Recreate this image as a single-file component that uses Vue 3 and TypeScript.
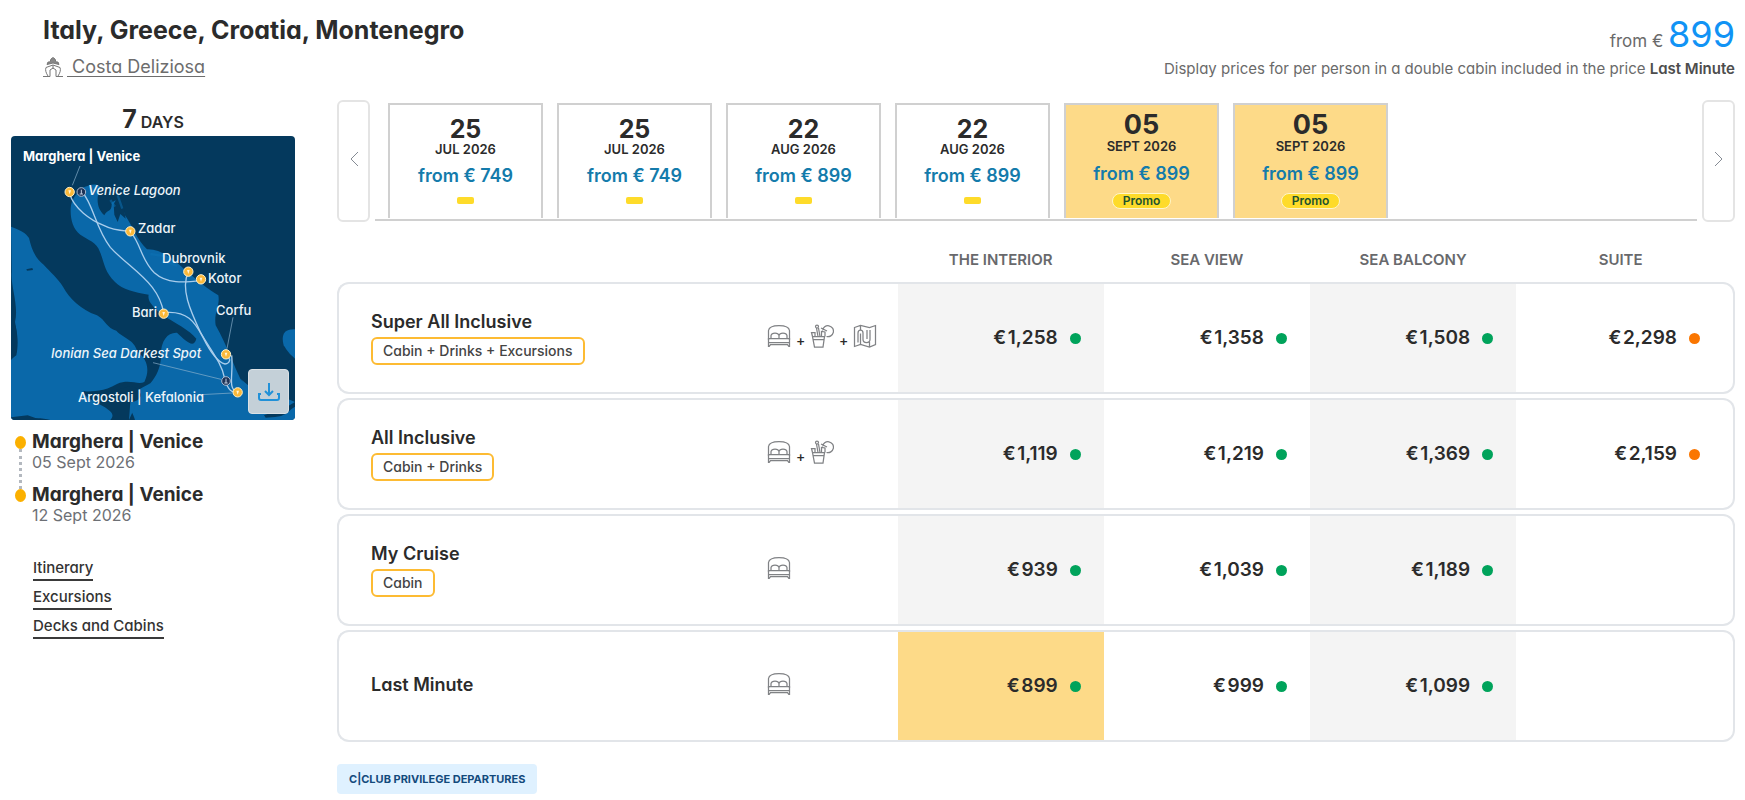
<script setup lang="ts">
interface Departure {
  id: number
  day: string
  month: string
  price: string
  promo: boolean
}

interface Fare {
  price: string
  status: 'available' | 'limited'
  best?: boolean
}

interface Offer {
  name: string
  includes: string
  icons: ('cabin' | 'drinks' | 'tours')[]
  fares: (Fare | null)[]
}

interface Stop {
  port: string
  date: string
}

const departures: Departure[] = [
  { id: 1, day: '25', month: 'JUL 2026', price: '749', promo: false },
  { id: 2, day: '25', month: 'JUL 2026', price: '749', promo: false },
  { id: 3, day: '22', month: 'AUG 2026', price: '899', promo: false },
  { id: 4, day: '22', month: 'AUG 2026', price: '899', promo: false },
  { id: 5, day: '05', month: 'SEPT 2026', price: '899', promo: true },
  { id: 6, day: '05', month: 'SEPT 2026', price: '899', promo: true },
]

const cabins: string[] = ['THE INTERIOR', 'SEA VIEW', 'SEA BALCONY', 'SUITE']

const offers: Offer[] = [
  {
    name: 'Super All Inclusive',
    includes: 'Cabin + Drinks + Excursions',
    icons: ['cabin', 'drinks', 'tours'],
    fares: [
      { price: '1,258', status: 'available' },
      { price: '1,358', status: 'available' },
      { price: '1,508', status: 'available' },
      { price: '2,298', status: 'limited' },
    ],
  },
  {
    name: 'All Inclusive',
    includes: 'Cabin + Drinks',
    icons: ['cabin', 'drinks'],
    fares: [
      { price: '1,119', status: 'available' },
      { price: '1,219', status: 'available' },
      { price: '1,369', status: 'available' },
      { price: '2,159', status: 'limited' },
    ],
  },
  {
    name: 'My Cruise',
    includes: 'Cabin',
    icons: ['cabin'],
    fares: [
      { price: '939', status: 'available' },
      { price: '1,039', status: 'available' },
      { price: '1,189', status: 'available' },
      null,
    ],
  },
  {
    name: 'Last Minute',
    includes: '',
    icons: ['cabin'],
    fares: [
      { price: '899', status: 'available', best: true },
      { price: '999', status: 'available' },
      { price: '1,099', status: 'available' },
      null,
    ],
  },
]

const stops: Stop[] = [
  { port: 'Marghera | Venice', date: '05 Sept 2026' },
  { port: 'Marghera | Venice', date: '12 Sept 2026' },
]

const links: string[] = ['Itinerary', 'Excursions', 'Decks and Cabins']

const ports: [number, number][] = [
  [208, 200],
  [390, 318],
  [564, 439],
  [602, 462],
  [490, 565],
  [677, 687],
  [712, 801],
]

const sights: [number, number][] = [
  [243, 200],
  [677, 767],
]
</script>

<template>
  <div class="page">
    <header class="top">
      <div>
        <h1 class="title">Italy, Greece, Croatia, Montenegro</h1>
        <div class="ship">
          <svg class="ship-icon" viewBox="0 0 20 20" aria-hidden="true">
            <path d="M0 19.5h7M13 19.5h7M5 19C3 16 2 13 3 10.5L10 8l7 2.500C18 13 17 16 15 19M7 19.500V13l3-2 3 2v6.500M10 8v4" />
            <path class="solid" d="M4 7.500L5 5h2l1-3 2-1.500L12 2l1 3h2l1 2.500L10 6z" />
          </svg>
          <a href="#ship">&nbsp;Costa Deliziosa</a>
        </div>
      </div>
      <div class="summary">
        <p class="lead">from € <span class="amount">899</span></p>
        <p class="note">Display prices for per person in a double cabin included in the price <strong>Last Minute</strong></p>
      </div>
    </header>

    <div class="columns">
      <aside class="side">
        <p class="days"><span class="days-count">7</span> DAYS</p>

        <div class="map">
          <svg class="map-art" viewBox="0 0 284 284" role="img" aria-label="Cruise route map">
            <svg viewBox="32 32 852 852" width="284" height="284">
              <rect x="32" y="32" width="852" height="852" fill="#04395d" />
              <g fill="#0a68a9">
                <path d="M212 240C208 270 214 310 240 328C262 344 290 350 298 378C312 410 312 440 344 470C368 494 400 500 445 508C440 530 462 545 480 566C520 590 570 616 588 640C580 670 560 650 530 622C500 620 478 650 482 700C478 730 470 750 450 774C420 790 398 800 388 830C386 850 400 868 404 884H800C780 850 750 800 720 760C700 720 680 660 646 600C640 560 660 540 654 510C620 490 600 470 560 440C520 400 480 370 440 372C410 345 396 300 374 270C366 240 360 210 334 232C336 262 318 252 312 270C290 250 286 220 300 184C280 170 262 184 250 186C230 200 218 216 212 240Z" />
                <path d="M32 304C60 314 76 322 86 338C94 372 104 398 130 418C150 440 172 458 188 484C208 520 240 552 290 570C316 584 320 610 348 616C370 640 400 640 412 680C440 700 450 734 432 770C412 780 388 760 350 776C310 800 280 796 252 800C300 830 360 800 410 830L386 884H150C120 874 80 880 32 884V700L48 690C56 650 50 620 44 590C56 540 30 480 34 440Z" />
                <path d="M884 612C850 610 842 630 850 660C862 680 872 690 884 700Z" />
                <path d="M780 884C800 870 830 880 850 868C862 866 870 850 884 844V884Z" />
                <path d="M720 760L756 790L850 816L884 830L850 850L790 870Z" />
              </g>
              <g fill="#04395d">
                <path d="M340 236l12-20 18 30 6 34-16-14-8 24-10-22z" />
                <path d="M78 432l18-4 2 6-18 2z" />
                <path d="M250 796C290 812 340 796 392 782C440 800 420 830 390 830L386 884H330C350 862 320 850 290 832C270 822 250 812 250 796Z" />
                <path d="M32 572C52 600 54 650 46 690L32 704ZM32 876l50-6 40 14H32z" />
              </g>
              <g fill="none" stroke="#0b72b5" stroke-width="7" opacity=".5">
                <path d="M450 386l50 8M500 410l30 12M330 224l14 20M352 210l14 40" />
              </g>
              <g fill="none" stroke="#a9cdec" stroke-width="4">
                <path d="M208 206C222 250 270 284 310 300C340 316 370 316 390 318C424 360 422 404 462 442C500 476 550 472 602 466" />
                <path d="M246 200C280 240 286 310 330 366C370 410 420 440 456 486C476 512 486 540 490 562C560 554 584 590 608 636C630 680 650 710 674 716C690 714 692 700 680 690" />
                <path d="M564 440C540 490 570 556 600 620C630 674 664 712 672 756C676 780 690 806 712 801C680 790 700 750 694 690" />
              </g>
              <g fill="none" stroke="#8eb4cf" stroke-width="2">
                <path d="M239 122L216 180M698 576L680 670M458 712L662 762M602 808L696 803" />
              </g>
              <g v-for="([x, y], i) in ports" :key="'p' + i">
                <circle :cx="x" :cy="y" r="14" fill="#fbb93a" stroke="#fff0c8" stroke-width="3" />
                <path :d="`M${x - 4} ${y - 5}l4 12 4-12z`" fill="#fff4da" />
              </g>
              <g v-for="([x, y], i) in sights" :key="'s' + i">
                <circle :cx="x" :cy="y" r="13" fill="#1e3357" stroke="#a9b9cf" stroke-width="3" />
                <path :d="`M${x} ${y - 7}v13M${x - 5} ${y + 6}h10`" stroke="#c5d1e2" stroke-width="3" />
              </g>
            </svg>
            <g class="map-text">
              <text class="strong" x="12" y="25">Marghera | Venice</text>
              <text class="sight" x="77" y="59">Venice Lagoon</text>
              <text x="127" y="97">Zadar</text>
              <text x="151" y="127">Dubrovnik</text>
              <text x="197" y="147">Kotor</text>
              <text x="121" y="181">Bari</text>
              <text x="205" y="179">Corfu</text>
              <text class="sight" x="40" y="222">Ionian Sea Darkest Spot</text>
              <text x="67" y="266">Argostoli | Kefalonia</text>
            </g>
          </svg>
          <button class="download" type="button" aria-label="Download map">
            <svg viewBox="0 0 24 20" aria-hidden="true">
              <path d="M12 1v12M8 9l4 4 4-4M2 12v4q0 2 2 2h16q2 0 2-2v-4M1 12h3M20 12h3" />
            </svg>
          </button>
        </div>

        <ol class="stops">
          <li v-for="stop in stops" :key="stop.date" class="stop">
            <span class="port">{{ stop.port }}</span>
            <span class="date">{{ stop.date }}</span>
          </li>
        </ol>

        <nav class="links">
          <a v-for="link in links" :key="link" href="#details">{{ link }}</a>
        </nav>
      </aside>

      <main class="main">
        <div class="carousel">
          <button class="arrow" type="button" aria-label="Previous departures">
            <svg viewBox="0 0 10 16" aria-hidden="true"><path d="M9 1L2 8l7 7" /></svg>
          </button>
          <div class="track">
            <button
              v-for="departure in departures"
              :key="departure.id"
              type="button"
              class="departure"
              :class="{ promo: departure.promo }"
            >
              <span class="day">{{ departure.day }}</span>
              <span class="month">{{ departure.month }}</span>
              <span class="from">from € {{ departure.price }}</span>
              <span v-if="departure.promo" class="badge">Promo</span>
              <span v-else class="dash"></span>
            </button>
          </div>
          <button class="arrow" type="button" aria-label="Next departures">
            <svg viewBox="0 0 10 16" aria-hidden="true"><path d="M1 1l7 7-7 7" /></svg>
          </button>
        </div>

        <table class="fares">
          <colgroup>
            <col class="col-name" />
            <col class="col-icons" />
            <col class="col-fare" />
            <col class="col-fare" />
            <col class="col-fare" />
            <col class="col-last" />
          </colgroup>
          <thead>
            <tr>
              <td colspan="2"></td>
              <th v-for="cabin in cabins" :key="cabin" scope="col">{{ cabin }}</th>
            </tr>
          </thead>
          <tbody>
            <tr v-for="offer in offers" :key="offer.name">
              <th scope="row" class="offer">
                <span class="offer-name">{{ offer.name }}</span>
                <span v-if="offer.includes" class="includes">{{ offer.includes }}</span>
              </th>
              <td class="icons-cell">
                <div class="icons">
                  <template v-for="(icon, i) in offer.icons" :key="icon">
                    <span v-if="i > 0" class="plus">+</span>
                    <svg v-if="icon === 'cabin'" class="icon" viewBox="0 0 24 24" aria-hidden="true">
                      <path d="M1.500 16V6.500C2 3 6 1.500 12 1.500S22 3 22.500 6.500V16" />
                      <path d="M1.500 23v-8.500h21V23M1.500 18.500h21M2 22.500l1.500-2h17l1.500 2" />
                      <path d="M4 14v-2.500Q4.500 9 8 9t4 2.500V14M12 14v-2.500Q12.500 9 16 9t4 2.500V14" />
                    </svg>
                    <svg v-else-if="icon === 'drinks'" class="icon" viewBox="0 0 24 24" aria-hidden="true">
                      <path d="M2.500 12.500h12L13 23H4.500zM2.500 12.500L1.500 8.500H5v4M11.500 12.500v-5L15 8v4.500M3 15.500h11M8 12.500L6.500 4M10 12.500L8.500 4" />
                      <circle cx="7" cy="2.500" r="1.500" />
                      <path d="M12.500 6.500A5.500 5.500 0 1 1 16.500 12.500M11 4l6 3" />
                    </svg>
                    <svg v-else class="icon" viewBox="0 0 24 24" aria-hidden="true">
                      <path d="M1.500 3.500l6-2 9 2 6-2v19l-6 2.500-9-2.500-6 2zM7.500 1.500V6M16.500 18v5" />
                      <path d="M5 18.500V9q0-3 2.500-3T10 9v6.500q0 3 3.500 3T17 15.500V6M7.500 9.500v11M14 6v9" />
                    </svg>
                  </template>
                </div>
              </td>
              <td v-for="(fare, i) in offer.fares" :key="i" class="fare" :class="{ best: fare?.best }">
                <div v-if="fare" class="price">
                  <span>€&#8202;{{ fare.price }}</span>
                  <span class="dot" :class="fare.status"></span>
                </div>
              </td>
            </tr>
          </tbody>
        </table>

        <span class="club">C|CLUB PRIVILEGE DEPARTURES</span>
      </main>
    </div>
  </div>
</template>

<style>
body {
  margin: 0;
  background: #fff;
}
</style>

<style scoped>
.page {
  box-sizing: border-box;
  padding: 0 10px 6px 11px;
  font-family: Inter, "Open Sans", sans-serif;
  font-feature-settings: "cv11";
  color: #2b2b2b;
}

.page * {
  box-sizing: border-box;
}

button {
  font: inherit;
  font-feature-settings: inherit;
  color: inherit;
  padding: 0;
  cursor: pointer;
}

.top {
  display: flex;
  justify-content: space-between;
  height: 100px;
  padding-left: 32px;
}

.title {
  margin: 0;
  padding-top: 15px;
  font-size: 25px;
  line-height: 30px;
  font-weight: 700;
}

.ship {
  display: flex;
  align-items: center;
  gap: 4px;
  margin-top: 10px;
  font-size: 18px;
  line-height: 24px;
  color: #6d6d6d;
}

.ship a {
  color: inherit;
  text-underline-offset: 3px;
}

.ship-icon {
  width: 20px;
  height: 20px;
  fill: none;
  stroke: #777;
  stroke-width: 1;
}

.ship-icon .solid {
  fill: #888;
}

.summary {
  text-align: right;
  color: #6a6a6a;
}

.summary p {
  margin: 0;
}

.lead {
  padding-top: 12px;
  height: 59px;
  font-size: 17px;
  line-height: 44px;
}

.amount {
  font-size: 36px;
  color: #1193f5;
}

.note {
  font-size: 15px;
  line-height: 20px;
}

.note strong {
  font-weight: 600;
  color: #4d4d4d;
}

.columns {
  display: grid;
  grid-template-columns: 284px minmax(0, 1fr);
  column-gap: 42px;
}

.days {
  margin: 0;
  height: 36px;
  line-height: 38px;
  text-align: center;
  font-size: 16px;
  font-weight: 600;
}

.days-count {
  font-size: 25px;
  font-weight: 700;
}

.map {
  position: relative;
}

.map-art {
  display: block;
  width: 100%;
  border-radius: 4px;
}

.map-text {
  font-size: 13px;
  font-weight: 500;
  fill: #eef5fa;
}

.map-text .strong {
  font-weight: 700;
  fill: #fff;
}

.map-text .sight {
  font-style: italic;
}

.download {
  position: absolute;
  right: 6px;
  bottom: 6px;
  display: grid;
  place-items: center;
  width: 41px;
  height: 45px;
  border: 1px solid #dbe1e5;
  border-radius: 4px;
  background: #c4d0d8;
}

.download svg {
  width: 24px;
  height: 20px;
  fill: none;
  stroke: #2191d8;
  stroke-width: 2;
}

.stops {
  list-style: none;
  margin: 0;
  padding: 10px 0 0 4px;
}

.stop {
  position: relative;
  height: 53px;
  padding-left: 17px;
}

.stop::before {
  content: "";
  position: absolute;
  left: 0;
  top: 6px;
  width: 11px;
  height: 13px;
  border-radius: 50%;
  background: #fbb000;
}

.stop:first-child::after {
  content: "";
  position: absolute;
  left: 4px;
  top: 19px;
  height: 40px;
  border-left: 3px dotted #b3b8bf;
}

.port,
.date {
  display: block;
}

.port {
  font-size: 19px;
  line-height: 23px;
  font-weight: 700;
}

.date {
  font-size: 16px;
  line-height: 18px;
  color: #6d7075;
}

.links {
  display: flex;
  flex-direction: column;
  align-items: flex-start;
  gap: 4px;
  padding: 20px 0 0 22px;
}

.links a {
  border-bottom: 2px solid #3a3a3a;
  font-size: 15px;
  line-height: 23px;
  font-weight: 500;
  color: #333;
  text-decoration: none;
}

.carousel {
  display: flex;
  gap: 5px;
  height: 122px;
}

.arrow {
  flex: none;
  width: 33px;
  border: 2px solid #e4e4e4;
  border-radius: 6px;
  background: #fff;
}

.arrow svg {
  width: 10px;
  height: 16px;
  fill: none;
  stroke: #858b94;
  stroke-width: 1;
}

.track {
  flex: 1;
  display: flex;
  align-items: flex-start;
  gap: 14px;
  height: 121px;
  padding: 3px 0 0 13px;
  border-bottom: 2px solid #d0d0d0;
}

.departure {
  display: flex;
  flex-direction: column;
  align-items: center;
  width: 155px;
  height: 115px;
  padding-top: 12px;
  border: 2px solid #d0d0d0;
  border-bottom: 0;
  background: #fff;
}

.day {
  font-size: 25px;
  line-height: 25px;
  font-weight: 700;
}

.month {
  font-size: 13px;
  line-height: 14px;
  font-weight: 600;
}

.from {
  margin-top: 8px;
  font-size: 18px;
  line-height: 24px;
  font-weight: 600;
  color: #147bab;
}

.dash {
  width: 17px;
  height: 7px;
  margin-top: 9px;
  border-radius: 2px;
  background: #fedb2a;
}

.departure.promo {
  padding-top: 6px;
  background: #fdda88;
}

.promo .day {
  font-size: 27px;
  line-height: 28px;
}

.promo .month {
  line-height: 15px;
}

.badge {
  margin-top: 7px;
  padding: 0 10px;
  border: 1px solid #fff6c8;
  border-radius: 8px;
  background: #fedb2a;
  font-size: 12px;
  line-height: 14px;
  font-weight: 600;
  color: #21532f;
}

.fares {
  width: 100%;
  table-layout: fixed;
  border-collapse: separate;
  border-spacing: 0 4px;
}

.col-name {
  width: 30.7%;
}

.col-icons {
  width: 9.4%;
}

.col-fare {
  width: 14.75%;
}

.col-last {
  width: 15.65%;
}

.fares td,
.fares th {
  padding: 0;
}

.fares thead th {
  height: 52px;
  padding-top: 17px;
  vertical-align: top;
  font-size: 15px;
  line-height: 34px;
  font-weight: 600;
  color: #68696c;
}

.fares thead th:last-child {
  padding-right: 10px;
}

tbody th,
tbody td {
  height: 112px;
  border: 2px solid #e2e5e9;
  border-width: 2px 0;
}

tbody .offer {
  border-left-width: 2px;
  border-radius: 12px 0 0 12px;
  text-align: left;
  vertical-align: middle;
}

tbody .fare:last-child {
  border-right-width: 2px;
  border-radius: 0 12px 12px 0;
}

.fares .offer {
  padding: 0 0 3px 32px;
}

.offer-name {
  display: block;
  font-size: 18px;
  line-height: 26px;
  font-weight: 600;
}

.includes {
  display: inline-block;
  margin-top: 2px;
  padding: 0 10px;
  border: 2px solid #fdbb33;
  border-radius: 6px;
  font-size: 14px;
  line-height: 24px;
  font-weight: 500;
  color: #444;
}

.icons {
  display: flex;
  align-items: center;
  gap: 4px;
  padding: 0 0 4px 1px;
}

.icon {
  width: 24px;
  height: 24px;
  fill: none;
  stroke: #808285;
  stroke-width: 1.25;
}

.plus {
  width: 11px;
  padding-top: 10px;
  font-size: 14px;
  line-height: 14px;
  font-weight: 500;
  text-align: center;
}

.fare:nth-child(odd) {
  background: #f4f4f4;
}

.fare.best {
  background: #fdda88;
}

.price {
  display: flex;
  align-items: center;
  justify-content: flex-end;
  gap: 12px;
  padding-right: 23px;
  font-size: 19px;
  line-height: 28px;
  font-weight: 600;
}

.fare:last-child .price {
  padding-right: 33px;
}

.dot {
  width: 11px;
  height: 11px;
  border-radius: 50%;
}

.dot.available {
  background: #00a35b;
}

.dot.limited {
  background: #fa7600;
}

.club {
  display: inline-block;
  margin-top: 18px;
  padding: 0 12px;
  border-radius: 4px;
  background: #dff1ff;
  font-size: 11px;
  line-height: 30px;
  font-weight: 700;
  color: #134a7c;
}
</style>
